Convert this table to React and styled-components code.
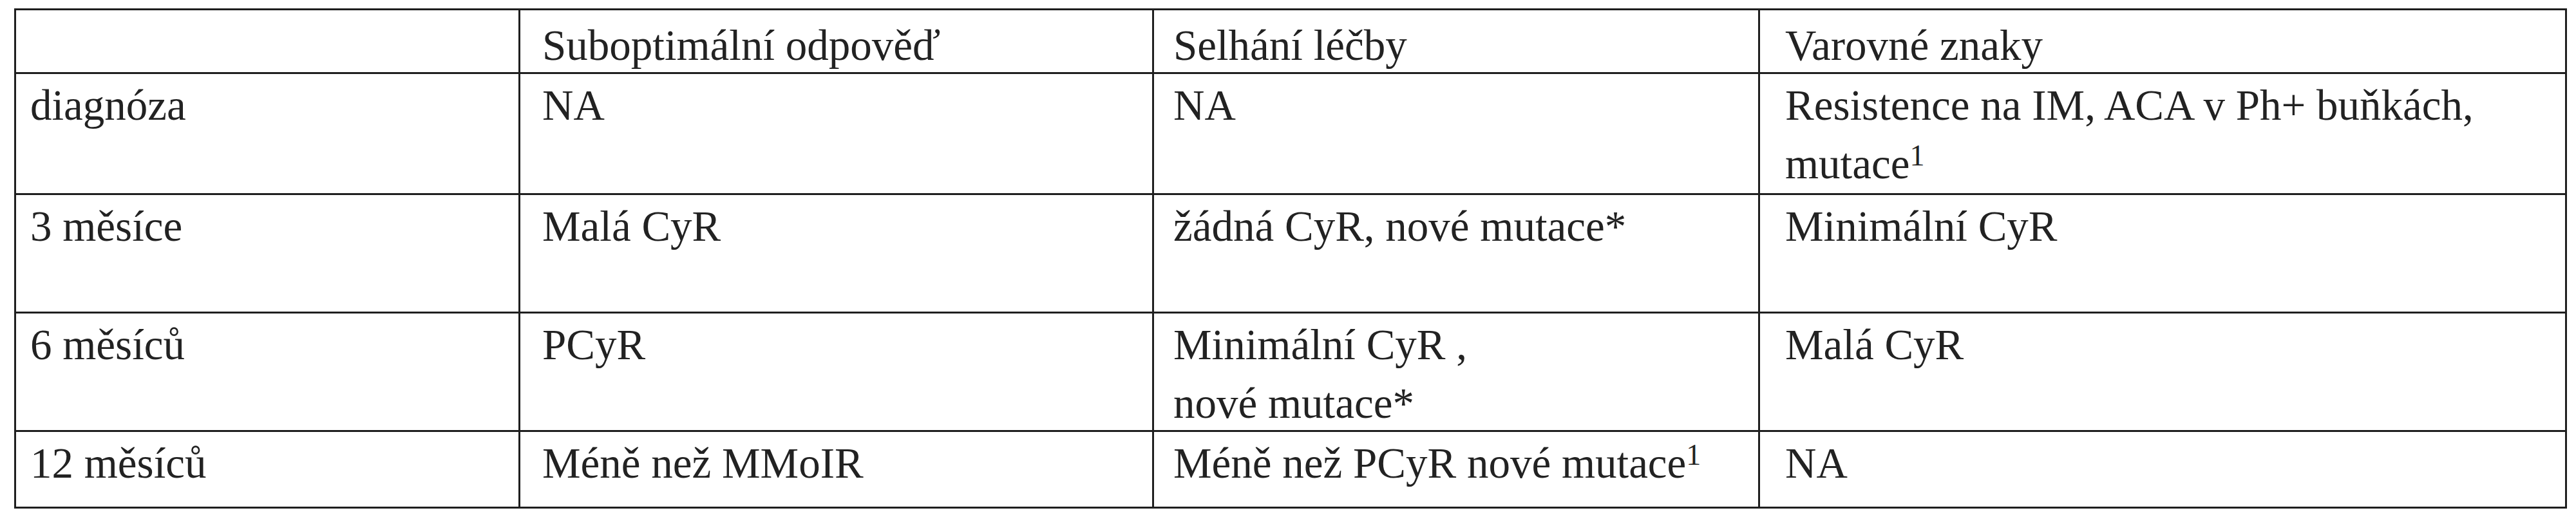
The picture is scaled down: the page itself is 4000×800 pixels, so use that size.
import React from "react";
import styled, { createGlobalStyle } from "styled-components";

const GlobalStyle = createGlobalStyle`
  html, body {
    margin: 0;
    padding: 0;
    background: #ffffff;
  }
  body {
    width: 4000px;
    height: 800px;
    overflow: hidden;
  }
`;

const Page = styled.div`
  padding: 13px 0 0 22px;
`;

const Table = styled.div`
  display: grid;
  grid-template-columns: 780px 981px 938px 1250px;
  grid-template-rows: 96px 185px 181px 181px 116px;
  gap: 3px;
  padding: 3px;
  width: max-content;
  background: #1f1f1f;
  font-family: "Liberation Serif", "Times New Roman", serif;
  font-size: 67px;
  line-height: 91px;
  color: #222222;
`;

const Cell = styled.div`
  background: #ffffff;
  padding-left: ${(p) => p.$pad}px;
  padding-top: ${(p) => (p.$head ? 9 : 3)}px;
  white-space: nowrap;
`;

const Sup = styled.span`
  font-size: 46px;
  line-height: 0;
  vertical-align: 20px;
`;

const pads = [22, 34, 30, 39];

const rows = [
  [
    "",
    "Suboptimální odpověď",
    "Selhání léčby",
    "Varovné znaky",
  ],
  [
    "diagnóza",
    "NA",
    "NA",
    <>
      Resistence na IM, ACA v Ph+ buňkách,
      <br />
      mutace<Sup>1</Sup>
    </>,
  ],
  ["3 měsíce", "Malá CyR", "žádná CyR, nové mutace*", "Minimální CyR"],
  [
    "6 měsíců",
    "PCyR",
    <>
      Minimální CyR ,
      <br />
      nové mutace*
    </>,
    "Malá CyR",
  ],
  [
    "12 měsíců",
    "Méně než MMoIR",
    <>
      Méně než PCyR nové mutace<Sup>1</Sup>
    </>,
    "NA",
  ],
];

const App = () => {
  return (
    <>
      <GlobalStyle />
      <Page>
        <Table>
          {rows.map((row, r) =>
            row.map((content, c) => (
              <Cell key={`${r}-${c}`} $pad={pads[c]} $head={r === 0}>
                {content}
              </Cell>
            ))
          )}
        </Table>
      </Page>
    </>
  );
};

export default App;
